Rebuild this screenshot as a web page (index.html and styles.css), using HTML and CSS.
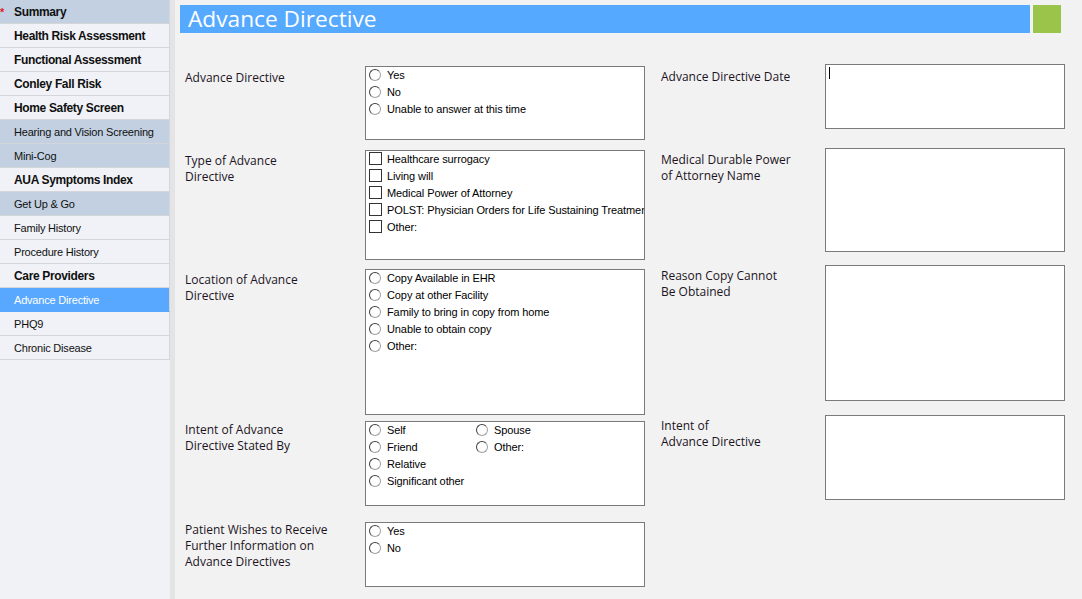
FILE: index.html
```html
<!DOCTYPE html>
<html>
<head>
<meta charset="utf-8">
<link rel="stylesheet" href="styles.css">
</head>
<body>
<div class="app">
  <nav class="sidebar">
    <ul class="nav">
      <li class="item hl bold"><span class="req">*</span>Summary</li>
      <li class="item bold">Health Risk Assessment</li>
      <li class="item bold">Functional Assessment</li>
      <li class="item bold">Conley Fall Risk</li>
      <li class="item bold">Home Safety Screen</li>
      <li class="item hl">Hearing and Vision Screening</li>
      <li class="item hl">Mini-Cog</li>
      <li class="item bold">AUA Symptoms Index</li>
      <li class="item hl">Get Up &amp; Go</li>
      <li class="item">Family History</li>
      <li class="item">Procedure History</li>
      <li class="item bold">Care Providers</li>
      <li class="item sel">Advance Directive</li>
      <li class="item">PHQ9</li>
      <li class="item">Chronic Disease</li>
    </ul>
  </nav>
  <div class="divider"></div>
  <main class="content">
    <header class="titlebar">
      <h1 class="title">Advance Directive</h1>
      <div class="badge"></div>
    </header>
    <div class="form">
      <div class="col col-left">
        <div class="row r1">
          <div class="label">Advance Directive</div>
          <div class="box h74">
            <div class="opt"><span class="radio"></span>Yes</div>
            <div class="opt"><span class="radio"></span>No</div>
            <div class="opt"><span class="radio"></span>Unable to answer at this time</div>
          </div>
        </div>
        <div class="row r2">
          <div class="label">Type of Advance<br>Directive</div>
          <div class="box h110">
            <div class="opt"><span class="check"></span>Healthcare surrogacy</div>
            <div class="opt"><span class="check"></span>Living will</div>
            <div class="opt"><span class="check"></span>Medical Power of Attorney</div>
            <div class="opt"><span class="check"></span>POLST: Physician Orders for Life Sustaining Treatment</div>
            <div class="opt"><span class="check"></span>Other:</div>
          </div>
        </div>
        <div class="row r3">
          <div class="label">Location of Advance<br>Directive</div>
          <div class="box h146">
            <div class="opt"><span class="radio"></span>Copy Available in EHR</div>
            <div class="opt"><span class="radio"></span>Copy at other Facility</div>
            <div class="opt"><span class="radio"></span>Family to bring in copy from home</div>
            <div class="opt"><span class="radio"></span>Unable to obtain copy</div>
            <div class="opt"><span class="radio"></span>Other:</div>
          </div>
        </div>
        <div class="row r4">
          <div class="label">Intent of Advance<br>Directive Stated By</div>
          <div class="box h85 two">
            <div class="opts">
              <div class="opt"><span class="radio"></span>Self</div>
              <div class="opt"><span class="radio"></span>Friend</div>
              <div class="opt"><span class="radio"></span>Relative</div>
              <div class="opt"><span class="radio"></span>Significant other</div>
            </div>
            <div class="opts">
              <div class="opt"><span class="radio"></span>Spouse</div>
              <div class="opt"><span class="radio"></span>Other:</div>
            </div>
          </div>
        </div>
        <div class="row r5">
          <div class="label">Patient Wishes to Receive<br>Further Information on<br>Advance Directives</div>
          <div class="box h65">
            <div class="opt"><span class="radio"></span>Yes</div>
            <div class="opt"><span class="radio"></span>No</div>
          </div>
        </div>
      </div>
      <div class="col col-right">
        <div class="row q1">
          <div class="label">Advance Directive Date</div>
          <div class="box wide h65"><span class="caret"></span></div>
        </div>
        <div class="row q2">
          <div class="label">Medical Durable Power<br>of Attorney Name</div>
          <div class="box wide h104"></div>
        </div>
        <div class="row q3">
          <div class="label">Reason Copy Cannot<br>Be Obtained</div>
          <div class="box wide h136"></div>
        </div>
        <div class="row q4">
          <div class="label">Intent of<br>Advance Directive</div>
          <div class="box wide h85"></div>
        </div>
      </div>
    </div>
  </main>
</div>
</body>
</html>
```
FILE: styles.css
```css
* { box-sizing: border-box; }
html, body { margin: 0; padding: 0; }
body {
  width: 1082px;
  height: 599px;
  overflow: hidden;
  background: #f2f2f2;
  font-family: "Liberation Sans", sans-serif;
}
.app { display: flex; height: 599px; }
.sidebar {
  width: 170px;
  flex: none;
  background: #f0f2f6;
}
.nav { list-style: none; margin: 0; padding: 0; }
.item {
  position: relative;
  height: 24px;
  line-height: 24px;
  padding-left: 14px;
  border-bottom: 1px solid #d4d6db;
  border-right: 1px solid #d4d6db;
  background: #f0f2f7;
  color: #101010;
  font-family: "Liberation Sans", sans-serif;
  font-size: 11px;
  letter-spacing: -0.2px;
  white-space: nowrap;
  overflow: hidden;
}
.item.bold { font-weight: bold; font-size: 12px; letter-spacing: -0.35px; }
.item.hl { background: #c2d0e1; }
.item.sel { background: #57a8fe; color: #ffffff; border-bottom-color: #57a8fe; }
.req {
  position: absolute;
  left: 0;
  top: 0;
  color: #e0202a;
  font-size: 11px;
}
.divider { width: 5px; flex: none; background: #e4e4e4; }
.content { flex: 1; padding: 5px 0 0 5px; }
.titlebar { display: flex; gap: 3px; height: 28px; }
.title {
  margin: 0;
  width: 850px;
  height: 28px;
  background: #55a9ff;
  color: #ffffff;
  font-family: "Open Sans", sans-serif;
  font-weight: normal;
  font-size: 22.7px;
  line-height: 28px;
  padding-left: 8px;
}
.badge { width: 28px; height: 28px; background: #9bc54a; }
.form { display: flex; padding: 33px 0 0 5px; gap: 16px; }
.col { display: flex; flex-direction: column; }
.row { display: flex; }
.label {
  font-family: "Open Sans", sans-serif;
  font-size: 12px;
  line-height: 16px;
  color: #1c1424;
}
.col-left .label { width: 180px; }
.col-right .label { width: 164px; }
.box {
  width: 280px;
  background: #ffffff;
  border: 1px solid #7a7a7a;
  padding: 0 0 0 3px;
  overflow: hidden;
}
.box.wide { width: 240px; }
.h65 { height: 65px; }
.h74 { height: 74px; }
.h85 { height: 85px; }
.h104 { height: 104px; }
.h110 { height: 110px; }
.h136 { height: 136px; }
.h146 { height: 146px; }
.r1 .label { padding-top: 4px; }
.r2 { margin-top: 10px; }
.r2 .label { padding-top: 3px; }
.r3 { margin-top: 9px; }
.r3 .label { padding-top: 3px; }
.r4 { margin-top: 6px; }
.r4 .label { padding-top: 1px; }
.r5 { margin-top: 16px; }
.r5 .label { padding-top: 0px; }
.col-right { margin-top: -2px; }
.q1 .label { padding-top: 5px; }
.q2 { margin-top: 19px; }
.q2 .label { padding-top: 4px; }
.q3 { margin-top: 13px; }
.q3 .label { padding-top: 3px; }
.q4 { margin-top: 14px; }
.q4 .label { padding-top: 3px; }
.two { display: flex; }
.two .opts { width: 107px; }
.opt {
  display: flex;
  align-items: center;
  height: 17px;
  font-family: "Liberation Sans", sans-serif;
  font-size: 11px;
  letter-spacing: -0.1px;
  color: #000000;
  white-space: nowrap;
}
.box > .opt:first-child, .opts > .opt:first-child { margin-top: -1px; }
.radio {
  width: 12px;
  height: 12px;
  border-radius: 50%;
  border: 1px solid #a0a0a0;
  border-top-color: #404040;
  border-left-color: #404040;
  background: #ffffff;
  margin-right: 6px;
  flex: none;
}
.check {
  width: 13px;
  height: 13px;
  border: 1px solid #333333;
  background: #ffffff;
  margin-right: 5px;
  flex: none;
}
.caret {
  display: block;
  width: 1px;
  height: 12px;
  background: #000000;
  margin: 2px 0 0 0;
}
```
